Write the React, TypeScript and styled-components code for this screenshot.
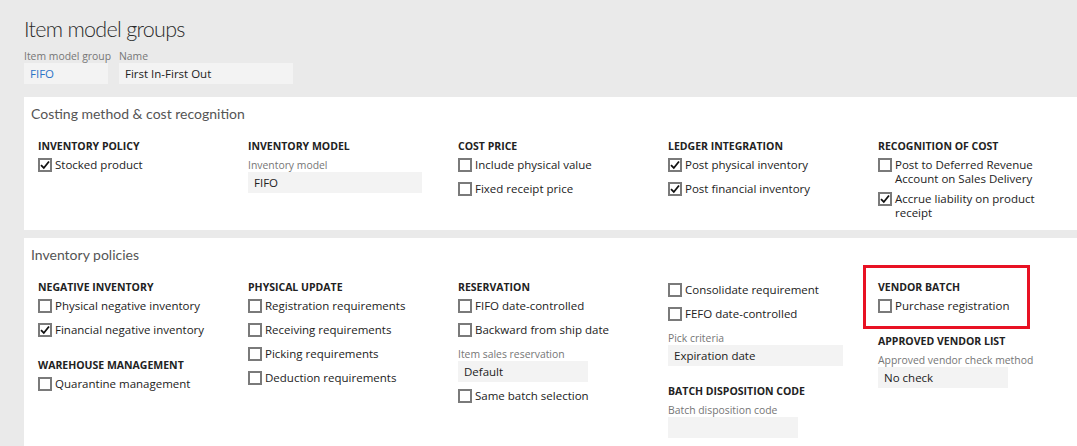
import styled, { createGlobalStyle } from "styled-components";

const GlobalStyle = createGlobalStyle`
  html, body {
    margin: 0;
    padding: 0;
    background: #eaeaea;
    overflow: hidden;
  }
  body {
    font-family: "Open Sans", "Noto Sans", sans-serif;
    color: #222;
  }
`;

const Page = styled.div`
  padding: 14px 0 0 24px;
  height: 446px;
  box-sizing: border-box;
`;

const Title = styled.h1`
  margin: 0;
  font-family: "Lato", "Open Sans", sans-serif;
  font-size: 21.5px;
  font-weight: 300;
  letter-spacing: -0.7px;
  line-height: 30px;
  color: #2b2b2b;
`;

const TopFields = styled.div`
  display: flex;
  gap: 11px;
  margin-top: 5px;
`;

const Field = styled.div`
  display: flex;
  flex-direction: column;
  padding-top: 3px;
`;

const TopField = styled(Field)<{ $w: number }>`
  padding-top: 0;
  width: ${(p) => p.$w}px;
`;

const FieldLabel = styled.label`
  font-size: 10.4px;
  line-height: 14px;
  color: #767676;
  white-space: nowrap;
`;

const Input = styled.div<{ $w: number; $link?: boolean }>`
  width: ${(p) => p.$w}px;
  height: 21px;
  box-sizing: border-box;
  padding: 0 6px;
  background: #f3f3f3;
  font-size: 11.5px;
  line-height: 21px;
  color: ${(p) => (p.$link ? "#2b74c7" : "#222")};
`;

const Panel = styled.section<{ $fill?: boolean }>`
  background: #fff;
  margin-top: ${(p) => (p.$fill ? 8 : 13)}px;
  padding: 7px 0 ${(p) => (p.$fill ? 40 : 7)}px 7px;
`;

const PanelTitle = styled.h2`
  margin: 0;
  font-family: "Lato", "Open Sans", sans-serif;
  font-size: 14px;
  font-weight: 400;
  line-height: 20px;
  color: #555;
`;

const Columns = styled.div`
  display: grid;
  grid-template-columns: repeat(5, 210px);
  margin-top: 15px;
  padding-left: 7px;
  align-items: start;
`;

const Column = styled.div`
  display: flex;
  flex-direction: column;
  gap: 18px;
`;

const Group = styled.div`
  display: flex;
  flex-direction: column;
`;

const Highlight = styled(Group)`
  position: relative;
  &::before {
    content: "";
    position: absolute;
    top: -15px;
    left: -15px;
    width: 167px;
    height: 64px;
    box-sizing: border-box;
    border: 3px solid #e81123;
    pointer-events: none;
  }
`;

const GroupHeading = styled.h3`
  margin: 0;
  padding-bottom: 2px;
  font-size: 10.5px;
  font-weight: 700;
  line-height: 14px;
  text-transform: uppercase;
  color: #222;
`;

const Stack = styled.div<{ $gap?: number }>`
  display: flex;
  flex-direction: column;
  gap: ${(p) => p.$gap ?? 4}px;
`;

const Row = styled.label`
  display: flex;
  align-items: flex-start;
  gap: 3px;
  padding: 3px 0;
  font-size: 11.5px;
  line-height: 14px;
  color: #222;
`;

const Box = styled.span`
  flex: none;
  width: 14px;
  height: 14px;
  box-sizing: border-box;
  border: 2px solid #7a7a7a;
  background: #fff;
  display: flex;
  align-items: center;
  justify-content: center;
`;

const RowText = styled.span`
  max-width: 160px;
`;

function Check({ label, checked }: { label: string; checked?: boolean }) {
  return (
    <Row>
      <Box>
        {checked ? (
          <svg width="10" height="10" viewBox="0 0 10 10">
            <path d="M1 5.2 L3.8 8 L9 1.5" fill="none" stroke="#111" strokeWidth="1.8" />
          </svg>
        ) : null}
      </Box>
      <RowText>{label}</RowText>
    </Row>
  );
}

function LabeledInput({ label, value, w }: { label: string; value: string; w: number }) {
  return (
    <Field>
      <FieldLabel>{label}</FieldLabel>
      <Input $w={w}>{value}</Input>
    </Field>
  );
}

function App() {
  return (
    <>
      <GlobalStyle />
      <Page>
        <Title>Item model groups</Title>
        <TopFields>
          <TopField $w={84}>
            <FieldLabel>Item model group</FieldLabel>
            <Input $w={84} $link>
              FIFO
            </Input>
          </TopField>
          <TopField $w={174}>
            <FieldLabel>Name</FieldLabel>
            <Input $w={174}>First In-First Out</Input>
          </TopField>
        </TopFields>

        <Panel>
          <PanelTitle>Costing method &amp; cost recognition</PanelTitle>
          <Columns>
            <Column>
              <Group>
                <GroupHeading>Inventory policy</GroupHeading>
                <Stack>
                  <Check label="Stocked product" checked />
                </Stack>
              </Group>
            </Column>
            <Column>
              <Group>
                <GroupHeading>Inventory model</GroupHeading>
                <Stack>
                  <LabeledInput label="Inventory model" value="FIFO" w={174} />
                </Stack>
              </Group>
            </Column>
            <Column>
              <Group>
                <GroupHeading>Cost price</GroupHeading>
                <Stack>
                  <Check label="Include physical value" />
                  <Check label="Fixed receipt price" />
                </Stack>
              </Group>
            </Column>
            <Column>
              <Group>
                <GroupHeading>Ledger integration</GroupHeading>
                <Stack>
                  <Check label="Post physical inventory" checked />
                  <Check label="Post financial inventory" checked />
                </Stack>
              </Group>
            </Column>
            <Column>
              <Group>
                <GroupHeading>Recognition of cost</GroupHeading>
                <Stack $gap={0}>
                  <Check label="Post to Deferred Revenue Account on Sales Delivery" />
                  <Check label="Accrue liability on product receipt" checked />
                </Stack>
              </Group>
            </Column>
          </Columns>
        </Panel>

        <Panel $fill>
          <PanelTitle>Inventory policies</PanelTitle>
          <Columns>
            <Column>
              <Group>
                <GroupHeading>Negative inventory</GroupHeading>
                <Stack>
                  <Check label="Physical negative inventory" />
                  <Check label="Financial negative inventory" checked />
                </Stack>
              </Group>
              <Group>
                <GroupHeading>Warehouse management</GroupHeading>
                <Stack>
                  <Check label="Quarantine management" />
                </Stack>
              </Group>
            </Column>
            <Column>
              <Group>
                <GroupHeading>Physical update</GroupHeading>
                <Stack>
                  <Check label="Registration requirements" />
                  <Check label="Receiving requirements" />
                  <Check label="Picking requirements" />
                  <Check label="Deduction requirements" />
                </Stack>
              </Group>
            </Column>
            <Column>
              <Group>
                <GroupHeading>Reservation</GroupHeading>
                <Stack>
                  <Check label="FIFO date-controlled" />
                  <Check label="Backward from ship date" />
                  <LabeledInput label="Item sales reservation" value="Default" w={130} />
                  <Check label="Same batch selection" />
                </Stack>
              </Group>
            </Column>
            <Column>
              <Group>
                <Stack>
                  <Check label="Consolidate requirement" />
                  <Check label="FEFO date-controlled" />
                  <LabeledInput label="Pick criteria" value="Expiration date" w={175} />
                </Stack>
              </Group>
              <Group>
                <GroupHeading>Batch disposition code</GroupHeading>
                <Stack>
                  <LabeledInput label="Batch disposition code" value="" w={130} />
                </Stack>
              </Group>
            </Column>
            <Column>
              <Highlight>
                <GroupHeading>Vendor batch</GroupHeading>
                <Stack>
                  <Check label="Purchase registration" />
                </Stack>
              </Highlight>
              <Group>
                <GroupHeading>Approved vendor list</GroupHeading>
                <Stack>
                  <LabeledInput label="Approved vendor check method" value="No check" w={130} />
                </Stack>
              </Group>
            </Column>
          </Columns>
        </Panel>
      </Page>
    </>
  );
}

export default App;
